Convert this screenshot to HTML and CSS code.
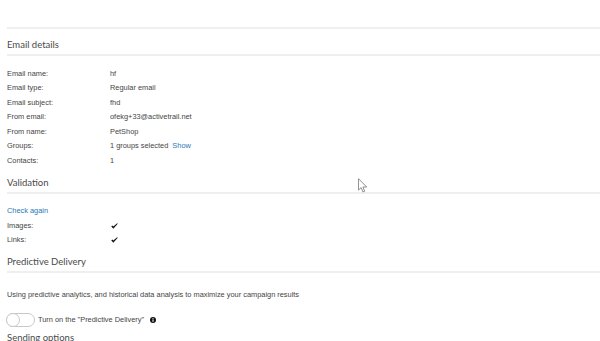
FILE: index.html
```html
<!DOCTYPE html>
<html lang="en">
<head>
  <meta charset="UTF-8">
  <title>Campaign summary</title>
  <link rel="stylesheet" href="styles.css">
</head>
<body>

<div class="top-bar"></div>

<div class="page">

  <!-- Email details -->
  <h3 class="section-title first">Email details</h3>
  <ul class="details">
    <li><span class="label">Email name:</span><span class="value">hf</span></li>
    <li><span class="label">Email type:</span><span class="value">Regular email</span></li>
    <li><span class="label">Email subject:</span><span class="value">fhd</span></li>
    <li><span class="label">From email:</span><span class="value">ofekg+33@activetrail.net</span></li>
    <li><span class="label">From name:</span><span class="value">PetShop</span></li>
    <li><span class="label">Groups:</span><span class="value">1 groups selected <a href="#" class="link">Show</a></span></li>
    <li><span class="label">Contacts:</span><span class="value">1</span></li>
  </ul>

  <!-- Validation -->
  <h3 class="section-title">Validation</h3>
  <ul class="details">
    <li><a href="#" class="link">Check again</a></li>
    <li><span class="label">Images:</span><span class="value"><svg class="check" viewBox="0 0 8 7"><path d="M0.2 3.9 L2.6 6.6 L7.8 0.9 L7.1 0.3 L2.6 4.2 L1.5 2.9 Z"/></svg></span></li>
    <li><span class="label">Links:</span><span class="value"><svg class="check" viewBox="0 0 8 7"><path d="M0.2 3.9 L2.6 6.6 L7.8 0.9 L7.1 0.3 L2.6 4.2 L1.5 2.9 Z"/></svg></span></li>
  </ul>

  <!-- Predictive Delivery -->
  <h3 class="section-title">Predictive Delivery</h3>
  <p class="description">Using predictive analytics, and historical data analysis to maximize your campaign results</p>
  <div class="toggle-row">
    <span class="toggle"><span class="knob"></span></span>
    <span class="toggle-label">Turn on the "Predictive Delivery"</span>
    <svg class="info" viewBox="0 0 10 10"><circle cx="5" cy="5" r="5" fill="#111"/><rect x="4.1" y="4.2" width="1.8" height="3.8" fill="#fff"/><circle cx="5" cy="2.6" r="1" fill="#fff"/></svg>
  </div>

  <h3 class="section-title plain">Sending options</h3>
</div>

<!-- Mauszeiger -->
<svg class="cursor" viewBox="0 0 12 17"><path d="M0.5 0.5 L0.5 13 L3.4 10.3 L5.4 15 L7.3 14.2 L5.4 9.6 L9.5 9.6 Z" fill="#fff" stroke="#777" stroke-width="0.9" stroke-linejoin="round"/></svg>

</body>
</html>
```

FILE: styles.css
```css
/* Grundlayout */
body {
  margin: 0;
  padding: 0;
  background: #fff;
  font-family: "Liberation Sans", Arial, sans-serif;
  font-size: 7.4px;
  color: #444;
  position: relative;
  overflow: hidden;
  height: 341px;
}

.top-bar {
  height: 27px;
  margin-left: 7px;
  border-bottom: 2px solid #efefef;
}

.page {
  padding-left: 7px;
}

/* Abschnitts-Titel */
.section-title {
  margin: 7.5px 0 0;
  padding-bottom: 2px;
  font-family: Lato, "Open Sans", sans-serif;
  font-weight: normal;
  font-size: 9.5px;
  line-height: 14px;
  color: #4a4a4a;
  border-bottom: 2px solid #efefef;
}

.section-title.first {
  margin-top: 9px;
}

.section-title.plain {
  border-bottom: none;
  margin-top: 4px;
}

/* Detail-Listen */
.details {
  list-style: none;
  margin: 10.5px 0 0;
  padding: 0;
}

.details li {
  display: flex;
  align-items: center;
  height: 14.5px;
  line-height: 14.5px;
}

.label {
  width: 103px;
  flex-shrink: 0;
}

.value {
  display: flex;
  align-items: center;
  gap: 4px;
}

.link {
  color: #2878b5;
  text-decoration: none;
}

.check {
  width: 7px;
  height: 6px;
  fill: #111;
  margin-left: 1px;
}

/* Predictive Delivery */
.description {
  margin: 14.5px 0 0;
  line-height: 14.5px;
}

.toggle-row {
  display: flex;
  align-items: center;
  height: 14px;
  margin-top: 10.5px;
}

.toggle {
  width: 27px;
  height: 12px;
  border: 1px solid #c8c8c8;
  border-radius: 8px;
  background: #fff;
  position: relative;
  margin-left: -1px;
}

.knob {
  position: absolute;
  left: -1px;
  top: -1px;
  width: 12px;
  height: 12px;
  border: 1px solid #c8c8c8;
  border-radius: 50%;
  background: #fff;
}

.toggle-label {
  margin-left: 3px;
}

.info {
  width: 6px;
  height: 6px;
  margin-left: 6px;
}

.cursor {
  position: absolute;
  left: 358px;
  top: 178px;
  width: 11px;
  height: 16px;
}
```
